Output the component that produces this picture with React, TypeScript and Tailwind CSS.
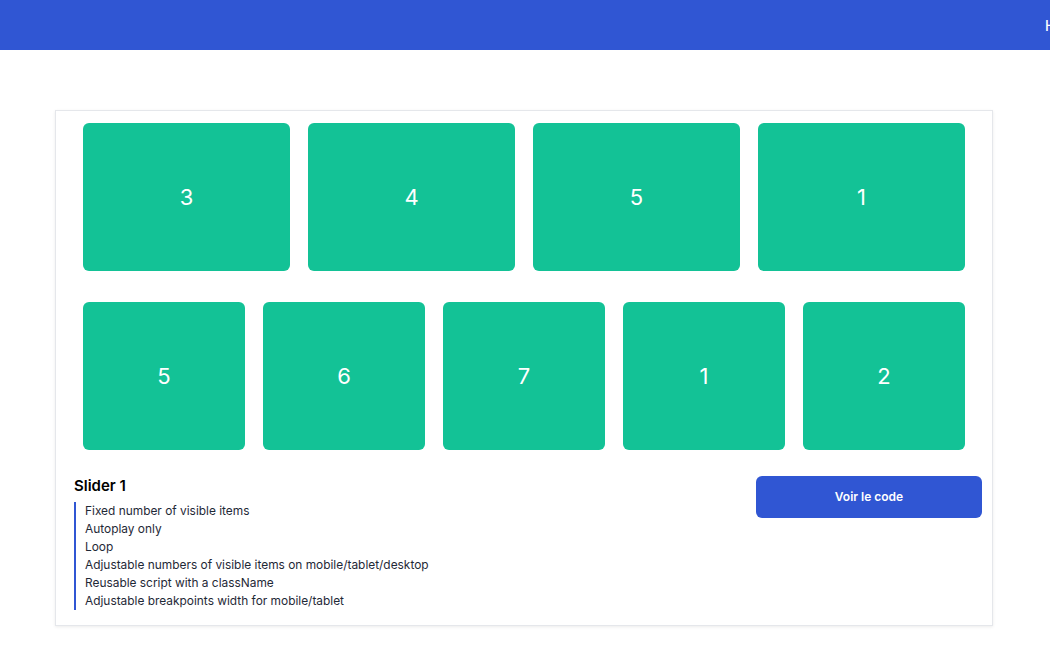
import React from "react";

const row1 = [3, 4, 5, 1];
const row2 = [5, 6, 7, 1, 2];
const features = [
  "Fixed number of visible items",
  "Autoplay only",
  "Loop",
  "Adjustable numbers of visible items on mobile/tablet/desktop",
  "Reusable script with a className",
  "Adjustable breakpoints width for mobile/tablet",
];

function Tile({ n }: { n: number }) {
  return (
    <div className="flex h-[148px] flex-1 items-center justify-center rounded-[6px] bg-[#13c296] text-[22px] font-normal text-white">
      {n}
    </div>
  );
}

export default function App() {
  return (
    <div
      className="min-h-[670px] w-[1050px] overflow-hidden bg-white"
      style={{ fontFamily: "Inter, 'Noto Sans', sans-serif" }}
    >
      <header className="flex h-[50px] items-center overflow-hidden bg-[#3056d3]">
        <div className="w-[1045px] shrink-0" />
        <nav className="flex shrink-0 gap-6 text-[14px] font-medium text-white">
          <span>Home</span>
          <span>About</span>
        </nav>
      </header>
      <main className="pl-[55px] pt-[60px]">
        <div className="w-[938px] border border-[#e5e7eb] bg-white shadow-[0_1px_3px_rgba(0,0,0,0.08)]">
          <div className="flex flex-col gap-[31px] px-[27px] pt-[12px]">
            <div className="flex gap-[18px]">
              {row1.map((n, i) => (
                <Tile key={i} n={n} />
              ))}
            </div>
            <div className="flex gap-[18px]">
              {row2.map((n, i) => (
                <Tile key={i} n={n} />
              ))}
            </div>
          </div>
          <div className="flex items-start justify-between pb-[15px] pl-[18px] pr-[10px] pt-[26px]">
            <div>
              <h3 className="text-[15px] font-semibold leading-[20px] text-black">Slider 1</h3>
              <ul className="mt-[6px] border-l-2 border-[#3056d3] pl-[9px] text-[11.9px] leading-[18px] text-[#1f2937]">
                {features.map((f) => (
                  <li key={f}>{f}</li>
                ))}
              </ul>
            </div>
            <button className="h-[42px] w-[226px] rounded-[6px] bg-[#3056d3] text-[12px] font-semibold text-white">
              Voir le code
            </button>
          </div>
        </div>
      </main>
    </div>
  );
}
